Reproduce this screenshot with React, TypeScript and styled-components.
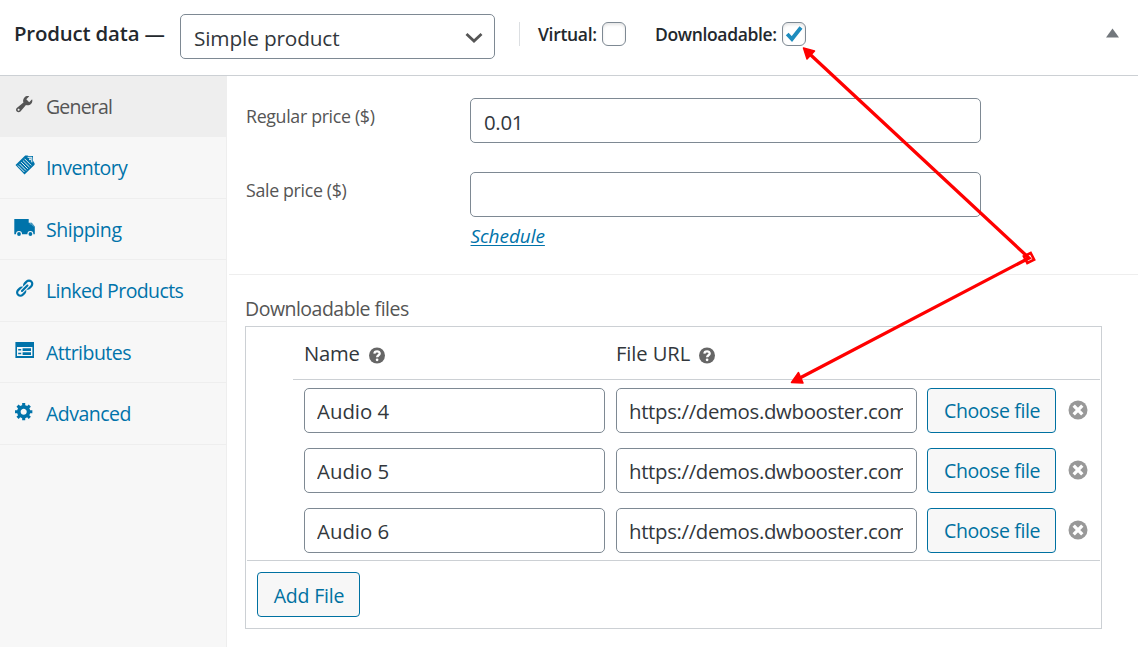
import React from "react";
import styled, { createGlobalStyle } from "styled-components";

const Global = createGlobalStyle`
  *, *::before, *::after { box-sizing: border-box; }
  body { margin: 0; background: #fff; overflow: hidden; }
  body, input, button, select { font-family: "Segoe UI", "Open Sans", "Noto Sans", sans-serif; }
`;

const Page = styled.div`
  position: relative;
  width: 1138px;
  height: 647px;
  display: flex;
  flex-direction: column;
  overflow: hidden;
  color: #32373c;
`;

const Label = styled.span<{ $size?: number; $track?: number; $weight?: number; $color?: string }>`
  font-size: ${(p) => p.$size ?? 19.5}px;
  letter-spacing: ${(p) => p.$track ?? 0}px;
  font-weight: ${(p) => p.$weight ?? 400};
  color: ${(p) => p.$color ?? "inherit"};
  line-height: 28px;
  white-space: nowrap;
`;

const Header = styled.header`
  flex: none;
  display: flex;
  align-items: flex-start;
  height: 76px;
  padding: 14px 19px 0 14px;
  border-bottom: 1px solid #ccd0d4;
  color: #23282d;
`;

const Title = styled.h2`
  margin: 5px 0 0;
  width: 166px;
  display: flex;
`;

const Select = styled.div`
  width: 315px;
  height: 45px;
  padding: 2px 11px 0 13px;
  border: 1px solid #7e8993;
  border-radius: 5px;
  display: flex;
  align-items: center;
  justify-content: space-between;
  color: #32373c;
`;

const Separator = styled.div`
  width: 1px;
  height: 24px;
  margin: 8px 18px 0 24px;
  background: #dcdfe2;
`;

const Option = styled.label<{ $width: number }>`
  width: ${(p) => p.$width}px;
  margin: 6px 29px 0 0;
  display: flex;
  justify-content: space-between;
`;

const Check = styled.span`
  width: 24px;
  height: 24px;
  margin-top: 2px;
  border: 1px solid #7e8993;
  border-radius: 6px;
  box-shadow: inset 0 2px 3px rgba(0, 0, 0, 0.1);
  display: flex;
  align-items: center;
  justify-content: center;
`;

const Toggle = styled.svg`
  margin: 14px 0 0 auto;
`;

const Body = styled.div`
  flex: 1;
  display: flex;
  min-height: 0;
`;

const Sidebar = styled.nav`
  width: 227px;
  background: #f7f7f7;
  border-right: 1px solid #eee;
`;

const Tab = styled.a<{ $active?: boolean; $height: number }>`
  display: flex;
  align-items: flex-start;
  height: ${(p) => p.$height}px;
  padding: 17px 0 0 13px;
  border-bottom: 1px solid #eee;
  background: ${(p) => (p.$active ? "#eee" : "transparent")};
  color: ${(p) => (p.$active ? "#555" : "#0073aa")};
  svg { flex: none; width: 23px; height: 23px; margin-right: 10px; }
  svg[viewBox="0 0 20 20"] { width: 20.4px; height: 20.4px; margin: 0.5px 11.6px 0 1px; }
`;

const Panel = styled.main`
  flex: 1;
  display: flex;
  flex-direction: column;
`;

const Pricing = styled.section`
  height: 199px;
  margin-left: 2px;
  padding: 22px 0 0 17px;
  border-bottom: 1px solid #eee;
`;

const Field = styled.div<{ $height: number }>`
  display: flex;
  height: ${(p) => p.$height}px;
`;

const FieldLabel = styled.div`
  width: 224px;
  padding-top: 4px;
`;

const Control = styled.div`
  display: flex;
  flex-direction: column;
`;

const Input = styled.input<{ $width: number; $track: number }>`
  display: block;
  width: ${(p) => p.$width}px;
  height: 45px;
  padding: 3px 13px 0 13px;
  border: 1px solid #7e8993;
  border-radius: 5px;
  background: #fff;
  color: #32373c;
  font-size: 20.4px;
  letter-spacing: ${(p) => p.$track}px;
  outline: none;
`;

const Schedule = styled.a`
  margin: 5px 0 0 0.5px;
  color: #0073aa;
  font-style: italic;
  text-decoration: underline;
  text-decoration-thickness: 1px;
  text-underline-offset: 2px;
`;

const Downloads = styled.section`
  padding: 20px 36px 0 18px;
  display: flex;
  flex-direction: column;
  color: #555;
`;

const FileTable = styled.div`
  height: 303px;
  margin-top: 3px;
  border: 1px solid #ccd0d4;
  padding: 0 1px;
  color: #32373c;
`;

const TableHead = styled.div`
  height: 53px;
  margin-left: 46px;
  padding: 12px 0 0 11px;
  border-bottom: 1px solid #ccd0d4;
  display: flex;
`;

const HeadCell = styled.div`
  width: 312px;
  display: flex;
  gap: 9px;
  svg { margin-top: 8px; }
`;

const TableBody = styled.div`
  height: 181px;
  padding: 8px 0 0 57px;
  border-bottom: 1px solid #ccd0d4;
  display: flex;
  flex-direction: column;
  gap: 15px;
`;

const Button = styled.button<{ $width: number }>`
  width: ${(p) => p.$width}px;
  height: 45px;
  margin-left: -1px;
  padding: 2px 0 0 1px;
  border: 1px solid #0071a1;
  border-radius: 4px;
  background: #f7f7f7;
  color: #0071a1;
  display: flex;
  align-items: center;
  justify-content: center;
`;

const FileRow = styled.div`
  display: flex;
  align-items: center;
  gap: 11px;
  ${Input} { padding: 1px 13px 0 12px; }
  ${Button} { padding-top: 0; }
  > svg { margin: 0 0 1px 1px; }
`;

const TableFoot = styled.div`
  padding: 11px 0 0 11px;
`;

const Annotation = styled.svg`
  position: absolute;
  inset: 0;
  pointer-events: none;
`;

const Wrench = () => (
  <svg viewBox="0 0 20 20" fill="currentColor"><path d="M16.68 9.77c-1.34 1.34-3.3 1.67-4.95.99l-5.41 6.52c-.99.99-2.59.99-3.58 0s-.99-2.59 0-3.57l6.52-5.42c-.68-1.65-.35-3.61.99-4.95 1.28-1.28 3.12-1.62 4.72-1.06l-2.89 2.89 2.82 2.82 2.86-2.87c.53 1.58.18 3.39-1.08 4.65zM3.81 16.21c.4.39 1.04.39 1.43 0 .4-.4.4-1.04 0-1.43-.39-.4-1.03-.4-1.43 0-.39.39-.39 1.03 0 1.43z" /></svg>
);
const Tag = () => (
  <svg viewBox="0 0 23 23" fill="none">
    <path d="M2.5 11.1 12.2 1.4h2.2l1.2.7h4.4v4.6l1.6 2.5v1.6L11.5 20.5Z" fill="currentColor" />
    <path d="M14.600 3.300h4.200v5" stroke="#f7f7f7" strokeWidth="1" />
    <circle cx="17" cy="5.200" r="1" fill="#f7f7f7" />
    <path d="m11.600 4.800 6.600 6.600M9.900 6.500l6.600 6.600M8.200 8.200l6.600 6.600M6.500 9.900l6.600 6.600M4.900 11.500l6.500 6.500" stroke="#f7f7f7" strokeWidth=".95" />
  </svg>
);
const Truck = () => (
  <svg viewBox="0 0 23 23">
    <path d="M1.3 3h14.4v3.8h3.1l3 3.6v7.8H1.3Z" fill="currentColor" />
    <path d="M16.7 7.8h1.8l2.3 2.7" fill="none" stroke="#f7f7f7" strokeWidth=".5" />
    <circle cx="6" cy="18" r="3" fill="#f7f7f7" /><circle cx="17.4" cy="18" r="3" fill="#f7f7f7" />
    <circle cx="6" cy="18" r="1.9" fill="currentColor" /><circle cx="17.4" cy="18" r="1.9" fill="currentColor" />
  </svg>
);
const Chain = () => (
  <svg viewBox="0 0 20 20" fill="currentColor"><path d="M17.74 2.76c1.68 1.69 1.68 4.41 0 6.1l-1.53 1.52c-1.12 1.12-2.7 1.47-4.14 1.09l2.62-2.61.76-.77.76-.76c.84-.84.84-2.2 0-3.04-.84-.85-2.2-.85-3.04 0l-.77.76-3.38 3.38c-.37-1.44-.02-3.02 1.1-4.14l1.52-1.53c1.69-1.68 4.42-1.68 6.1 0zM8.59 13.43l5.34-5.34c.42-.42.42-1.1 0-1.52-.44-.43-1.13-.39-1.53 0l-5.33 5.34c-.42.42-.42 1.1 0 1.52.44.43 1.13.39 1.52 0zm-.76 2.29l4.14-4.15c.38 1.44.03 3.02-1.09 4.14l-1.52 1.53c-1.69 1.68-4.41 1.68-6.1 0-1.68-1.68-1.68-4.42 0-6.1l1.53-1.52c1.12-1.12 2.7-1.47 4.14-1.1l-4.14 4.15c-.85.84-.85 2.2 0 3.05.84.84 2.2.84 3.04 0z" /></svg>
);
const Form = () => (
  <svg viewBox="0 0 23 23">
    <path d="M2.4 3h18.6v16H2.4Z" fill="currentColor" />
    <path d="M4 8h15.4v9H4Z" fill="#f7f7f7" />
    <path d="M5.2 10h3v1.4h-3ZM5.2 13.8h3v1.4h-3ZM9.6 9.2H18v2.8H9.6ZM9.6 13.2H18V16H9.6Z" fill="currentColor" />
  </svg>
);
const Gear = () => (
  <svg viewBox="0 0 20 20" fill="currentColor"><path d="M18 12h-2.18c-.17.7-.44 1.35-.81 1.93l1.54 1.54-2.1 2.1-1.54-1.54c-.58.36-1.23.63-1.91.79V19H8v-2.18c-.68-.16-1.33-.43-1.91-.79l-1.54 1.54-2.12-2.12 1.54-1.54c-.36-.58-.63-1.23-.79-1.91H1V9.03h2.17c.16-.7.44-1.35.8-1.94L2.43 5.55l2.1-2.1 1.54 1.54c.58-.37 1.24-.64 1.93-.81V2h3v2.18c.68.16 1.33.43 1.91.79l1.54-1.54 2.12 2.12-1.54 1.54c.36.59.64 1.24.8 1.94H18V12zm-8.5 1.5c1.66 0 3-1.34 3-3s-1.34-3-3-3-3 1.34-3 3 1.34 3 3 3z" /></svg>
);
const Help = () => (
  <svg width="16" height="17" viewBox="0 0 16 17" fill="none">
    <circle cx="8" cy="8.5" r="8" fill="#666" />
    <path d="M5.4 6.6C5.5 3.5 10.8 3.6 10.7 6.6C10.6 8.2 8.1 8.3 8.1 10.3" stroke="#fff" strokeWidth="2.3" />
    <circle cx="8.1" cy="12.8" r="1.35" fill="#fff" />
  </svg>
);
const Remove = () => (
  <svg width="20" height="20" viewBox="0 0 20 20" fill="none">
    <circle cx="10" cy="10" r="9.5" fill="#999" />
    <path d="m5.7 5.7 8.6 8.6m0-8.6-8.6 8.6" stroke="#fff" strokeWidth="3.3" />
  </svg>
);

const tabs = [
  { name: "General", icon: <Wrench />, height: 61, track: -0.8, active: true },
  { name: "Inventory", icon: <Tag />, height: 62, track: -0.58 },
  { name: "Shipping", icon: <Truck />, height: 61, track: -0.42 },
  { name: "Linked Products", icon: <Chain />, height: 62, track: -0.59 },
  { name: "Attributes", icon: <Form />, height: 61, track: -0.52 },
  { name: "Advanced", icon: <Gear />, height: 62, track: -0.5 },
];

const files = ["Audio 4", "Audio 5", "Audio 6"];

export default function App() {
  return (
    <Page>
      <Global />
      <Header>
        <Title><Label $size={20.4} $weight={600} $track={-0.17}>Product data —</Label></Title>
        <Select>
          <Label $size={20.8} $track={-0.15} $weight={500}>Simple product</Label>
          <svg width="18" height="12" viewBox="0 0 18 12" fill="none"><path d="m1.5 2 7.5 7 7.5-7" stroke="#555" strokeWidth="2.8" /></svg>
        </Select>
        <Separator />
        <Option $width={88}>
          <Label $size={17.5} $track={-0.3} $weight={600}>Virtual:</Label>
          <Check />
        </Option>
        <Option $width={151}>
          <Label $size={17.5} $track={-0.35} $weight={600}>Downloadable:</Label>
          <Check>
            <svg width="18" height="18" viewBox="0 0 18 18" fill="none"><path d="m2.2 9 4.7 5 9.100-11.500" stroke="#1e8cbe" strokeWidth="3.8" /></svg>
          </Check>
        </Option>
        <Toggle width="13" height="10" viewBox="0 0 13 10"><path d="M0 9.5 6.5.5l6.5 9Z" fill="#72777c" /></Toggle>
      </Header>
      <Body>
        <Sidebar>
          {tabs.map((t) => (
            <Tab key={t.name} $active={t.active} $height={t.height}>
              {t.icon}
              <Label $track={t.track}>{t.name}</Label>
            </Tab>
          ))}
        </Sidebar>
        <Panel>
          <Pricing>
            <Field $height={74}>
              <FieldLabel><Label $size={17.8} $track={-0.33} $color="#555">Regular price ($)</Label></FieldLabel>
              <Control><Input $width={511} $track={-0.3} defaultValue="0.01" /></Control>
            </Field>
            <Field $height={102}>
              <FieldLabel><Label $size={17.8} $track={-0.33} $color="#555">Sale price ($)</Label></FieldLabel>
              <Control>
                <Input $width={511} $track={0} />
                <Schedule><Label $size={19} $track={-0.05}>Schedule</Label></Schedule>
              </Control>
            </Field>
          </Pricing>
          <Downloads>
            <Label $track={-0.5}>Downloadable files</Label>
            <FileTable>
              <TableHead>
                <HeadCell><Label $size={20.2} $track={-0.2}>Name</Label><Help /></HeadCell>
                <HeadCell><Label $size={20.2} $track={-0.1}>File URL</Label><Help /></HeadCell>
              </TableHead>
              <TableBody>
                {files.map((name) => (
                  <FileRow key={name}>
                    <Input $width={301} $track={0} defaultValue={name} />
                    <Input $width={301} $track={-0.34} defaultValue="https://demos.dwbooster.com/audio-player" />
                    <Button $width={129}><Label $track={-0.4}>Choose file</Label></Button>
                    <Remove />
                  </FileRow>
                ))}
              </TableBody>
              <TableFoot>
                <Button $width={103}><Label $track={-0.2}>Add File</Label></Button>
              </TableFoot>
            </FileTable>
          </Downloads>
        </Panel>
      </Body>
      <Annotation width="1138" height="647" viewBox="0 0 1138 647" fill="none">
        <path d="M807 51.5 1029 258 796 380" stroke="#f00" strokeWidth="3.3" />
        <path d="m803.5 48 11 3-7.5 8ZM791.5 382.500l7-10 4.500 10.500Z" fill="#f00" stroke="#f00" strokeWidth="1.5" strokeLinejoin="round" />
        <rect x="1025.2" y="254.2" width="7.6" height="7.6" transform="rotate(-27 1029 258)" stroke="#f00" strokeWidth="2.6" />
      </Annotation>
    </Page>
  );
}
